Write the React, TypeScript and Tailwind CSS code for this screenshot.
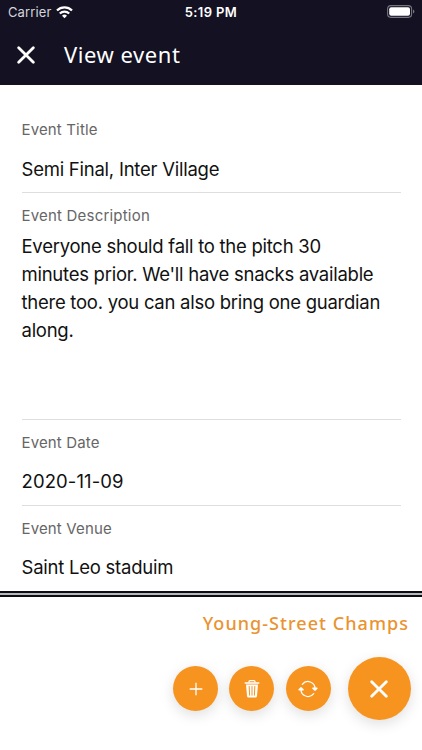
const INTER = "font-[Inter,'Liberation_Sans',sans-serif]";
const NOTO = "font-['Noto_Sans','Open_Sans',sans-serif]";

function StatusBar() {
  return (
    <div className="flex h-6 items-center justify-between pl-2 pr-[8px]">
      <div className="flex flex-1 items-center gap-[5px]">
        <span className="text-[13px] leading-4 tracking-[0.12px] text-[#d5d5da]">Carrier</span>
        <svg width="17" height="13" viewBox="0 0 17 13" fill="none" stroke="white" strokeWidth="2.3">
          <path d="M1 4.5a10.7 10.7 0 0 1 15 0" />
          <path d="M3.8 7.5a6.8 6.8 0 0 1 9.4 0" />
          <path d="M6 9.7a3.7 3.7 0 0 1 5 0L8.5 12.3z" fill="white" stroke="none" />
        </svg>
      </div>
      <span className="text-[13px] font-semibold leading-4 tracking-[0.38px]">5:19 PM</span>
      <div className="flex flex-1 justify-end">
        <svg className="relative -top-px left-px" width="28" height="13" viewBox="0 0 28 13">
          <rect x="0.6" y="0.6" width="24" height="11.8" rx="3.3" fill="none" stroke="#77767f" strokeWidth="1.1" />
          <rect x="2.2" y="2.2" width="20.8" height="8.6" rx="2" fill="white" />
          <path d="M26 4.5c1.9.6 1.9 3.4 0 4z" fill="#77767f" />
        </svg>
      </div>
    </div>
  );
}

function Close() {
  return (
    <svg width="18" height="18" viewBox="0 0 18 18" fill="none" stroke="white" strokeWidth="2.8" strokeLinecap="round">
      <path d="M1.7 1.7l14.6 14.6M16.3 1.7L1.7 16.3" />
    </svg>
  );
}

function Field({ label, value, spacing = "tracking-[-0.24px]" }: { label: string; value: string; spacing?: string }) {
  return (
    <div className="h-[86px] border-b border-[#dedede] pt-[13px]">
      <div className="text-[15px] leading-5 tracking-[0.15px] text-[#666]">{label}</div>
      <div className={`mt-[16.5px] text-[18.5px] leading-6 ${spacing}`}>{value}</div>
    </div>
  );
}

const round = "flex items-center justify-center rounded-full bg-[#f79420] shadow-[0_4px_14px_rgba(0,0,0,0.13)]";

export default function App() {
  return (
    <div className={`flex h-[750px] w-[422px] flex-col overflow-hidden bg-white text-[#111] ${INTER}`}>
      <header className="h-[85px] shrink-0 bg-[#131122] text-white">
        <StatusBar />
        <div className="flex h-[61px] items-center pl-[17px]">
          <Close />
          <h1 className={`mb-[2px] ml-[29px] text-[22px] leading-8 tracking-[0.55px] ${NOTO}`}>View event</h1>
        </div>
      </header>

      <main className="h-[506px] shrink-0 px-[21.5px] pt-[22px]">
        <Field label="Event Title" value="Semi Final, Inter Village" />
        <div className="h-[226.5px] border-b border-[#dedede] pt-[13px]">
          <div className="text-[15px] leading-5 tracking-[0.2px] text-[#666]">Event Description</div>
          <p className="mt-[6px] text-[18.5px] leading-[28px] tracking-[-0.26px]">
            Everyone should fall to the pitch 30<br />
            minutes prior. We'll have snacks available<br />
            there too. you can also bring one guardian<br />
            along.
          </p>
        </div>
        <Field label="Event Date" value="2020-11-09" spacing="tracking-[0.1px]" />
        <Field label="Event Venue" value="Saint Leo staduim" />
      </main>

      <footer className="flex-1">
        <div className="h-[6px] border-y-2 border-[#0c0c12] bg-[#b4b9bc]" />
        <div className={`mt-3 pr-[13px] text-right text-[18px] font-medium leading-7 tracking-[1.05px] text-[#ea9331] ${NOTO}`}>
          Young-Street Champs
        </div>
        <div className="mt-[20px] flex items-center justify-end pr-[11.5px]">
          <div className="mr-[17px] flex gap-[11.25px]">
            <button className={`size-[45px] ${round}`}>
              <svg width="14" height="14" viewBox="0 0 14 14" stroke="white" strokeWidth="1.3">
                <path d="M7 .7v12.6M.7 7h12.6" />
              </svg>
            </button>
            <button className={`size-[45px] ${round}`}>
              <svg width="16" height="18" viewBox="0 0 16 18" fill="none">
                <path d="M5 2.5V1.7Q5 .7 6 .7h4q1 0 1 1v.8" stroke="white" strokeWidth="1.2" />
                <path d="M.7 2.2h14.6v1.6H.7zM2 4.6h12L13 16q-.1 1.6-1.7 1.6H4.7Q3.1 17.6 3 16z" fill="white" />
                <path d="M5.2 6.5l.4 8.7M8 6.5v8.7M10.8 6.5l-.4 8.7" stroke="#f79420" strokeWidth="1" strokeLinecap="round" />
              </svg>
            </button>
            <button className={`size-[45px] ${round}`}>
              <svg width="20" height="18" viewBox="0 0 20 18" fill="none" stroke="white" strokeWidth="1.3" strokeLinecap="round" strokeLinejoin="round">
                <path d="M4.3 4.3A7.1 7.1 0 0 1 17 9M15.7 13.7A7.1 7.1 0 0 1 3 9" />
                <path d="M14.8 8.2L17 10.2 19 8.2zM1 9.8L3 7.8 5.2 9.8z" fill="white" />
              </svg>
            </button>
          </div>
          <button className={`size-[63px] ${round}`}>
            <Close />
          </button>
        </div>
      </footer>
    </div>
  );
}
